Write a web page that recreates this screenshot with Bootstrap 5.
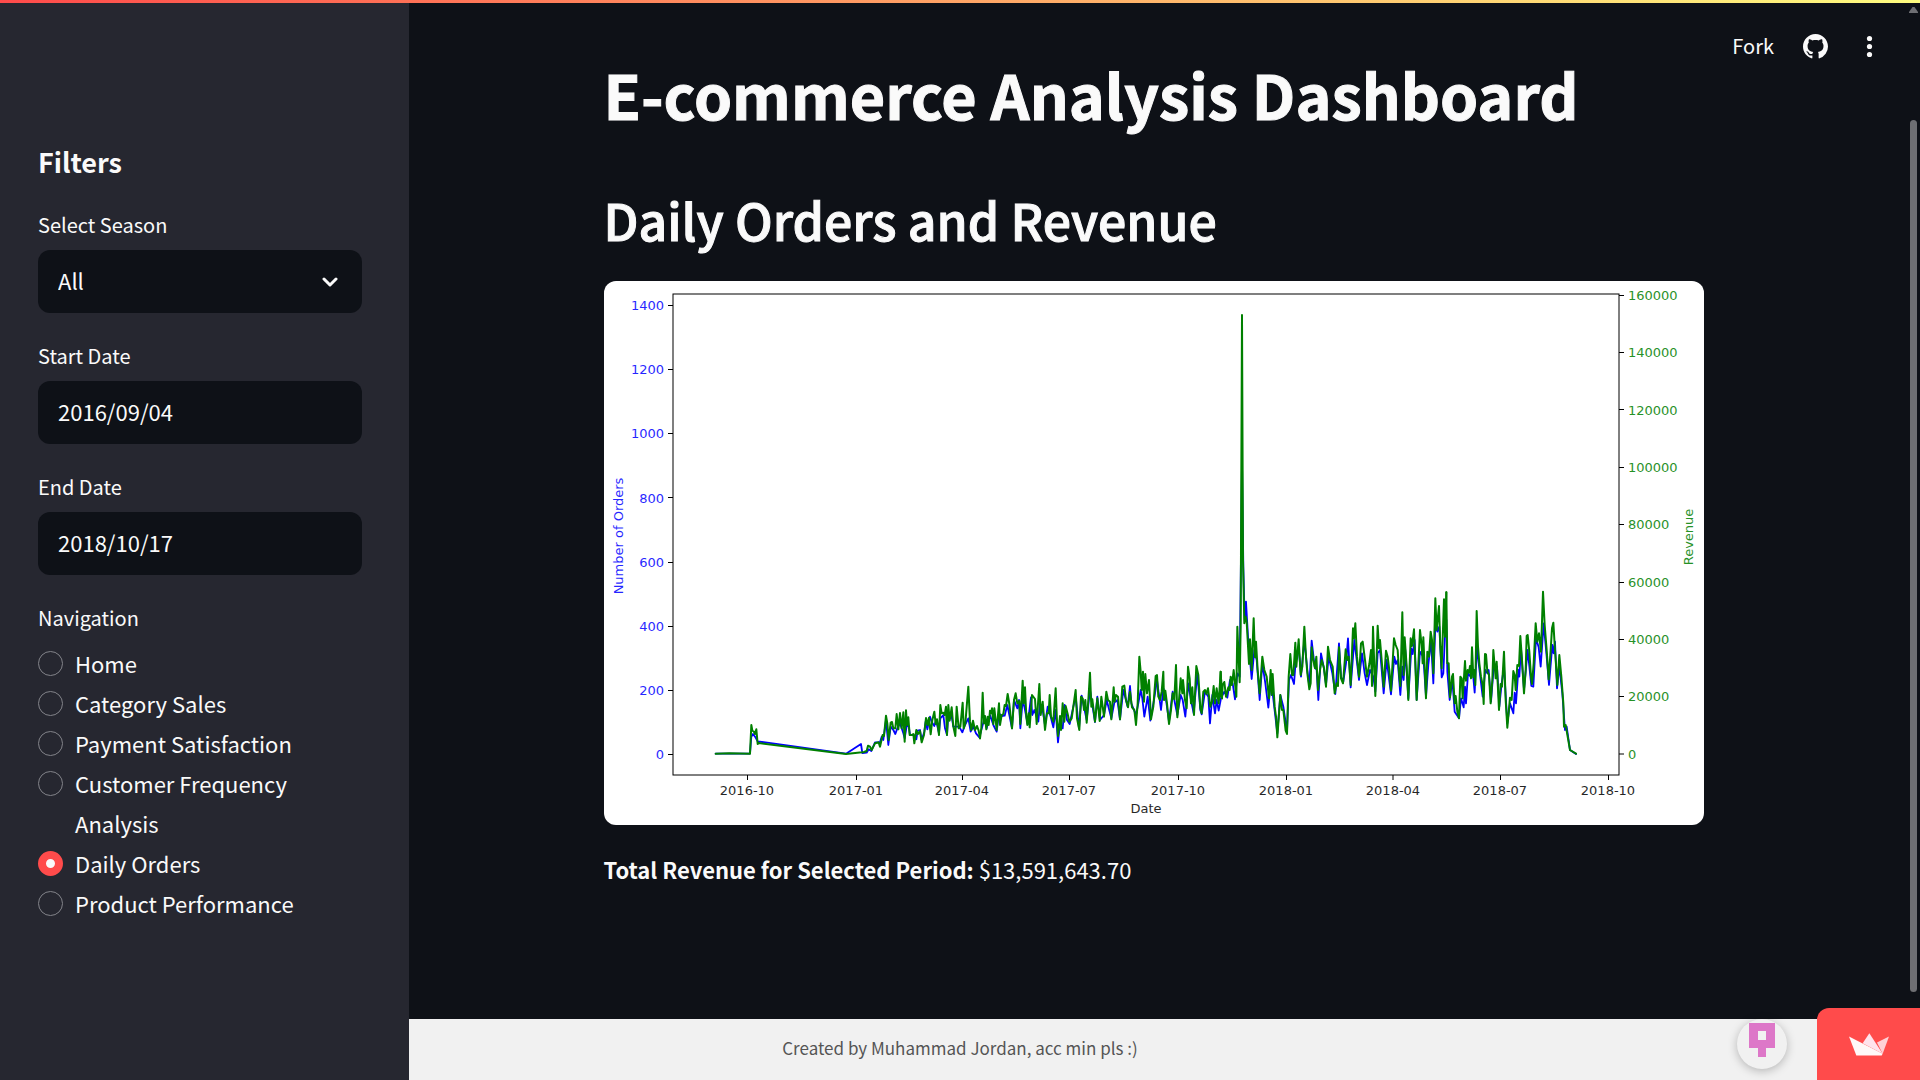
<!DOCTYPE html>
<html lang="en">
<head>
<meta charset="utf-8">
<meta name="viewport" content="width=device-width, initial-scale=1">
<title>E-commerce Analysis Dashboard</title>
<link href="https://cdn.jsdelivr.net/npm/bootstrap@5.3.0/dist/css/bootstrap.min.css" rel="stylesheet">
<style>
  body { background: #0e1117; color: #fafafa; font-family: "Noto Sans CJK SC", "Noto Sans", sans-serif; font-size: 22px; line-height: 40px; }
  .top-line { height: 3px; background: linear-gradient(90deg, #ff4b4b, #fffd80); z-index: 1050; }
  .side-panel { width: 409px; background: #262730; padding: 145px 47px 40px 38px; z-index: 1040; }
  .side-title { font-size: 27px; font-weight: 700; line-height: 34px; margin-bottom: 34px; }
  .field-group { margin-bottom: 31px; }
  .field-label { display: block; font-size: 20px; line-height: 24px; margin-bottom: 13px; }
  .field-box, .field-box:focus { height: 63px; background: #0e1117 none; color: #fafafa; border: 0; border-radius: 12px; padding: 0 20px 4px; font-size: 22px; line-height: 40px; box-shadow: none; }
  .field-arrow { right: 24px; pointer-events: none; }
  .nav-option { display: flex; gap: 12px; margin: 0; padding: 0; min-height: 40px; }
  .nav-option .form-check-input { float: none; flex: none; width: 25px; height: 25px; margin: 8px 0 0; background: #262730; border: 1px solid #83848a; }
  .nav-option .form-check-input:checked { background: #fafafa; border: 8px solid #ff4b4b; }
  .content-pane { padding: 53px 22px 100px 0; }
  .content-column { max-width: 1100px; }
  .page-title { font-size: 61px; font-weight: 700; line-height: 82px; margin-bottom: 50px; -webkit-text-stroke: 1px #fafafa; }
  .section-title { font-size: 50px; font-weight: 500; line-height: 68px; margin-bottom: 28px; -webkit-text-stroke: 1px #fafafa; }
  .chart-frame { background: #fff; border-radius: 12px; overflow: hidden; }
  .chart-frame svg { display: block; width: 100%; height: auto; font: 13px "DejaVu Sans", sans-serif; }
  .chart-frame text { opacity: .85; }
  .summary-line { margin-top: 24px; }
  .tool-links { top: 3px; right: 38px; height: 86px; gap: 29px; font-size: 20px; z-index: 1030; }
  .tool-links a, .tool-links button { color: #fafafa; text-decoration: none; background: none; border: 0; padding: 0; display: flex; align-items: center; }
  .credit-bar { background: #f1f1f1; color: #555; font-size: 17px; height: 61px; padding-bottom: 4px; }
  .corner { bottom: 0; right: 0; z-index: 1045; gap: 30px; }
  .owner-link { width: 50px; height: 50px; border-radius: 50%; background: #f1f1f1; margin-bottom: 11px; box-shadow: 0 2px 10px rgba(0,0,0,.25); overflow: hidden; }
  .host-link { width: 103px; height: 72px; background: #ff4b4b; border-radius: 12px 0 0 0; }
  .owner-link svg, .host-link svg { display: block; }
  .scroll-rail { top: 7px; right: 2px; bottom: 88px; width: 9px; z-index: 1035; }
  .scroll-thumb { width: 7px; background: #6e6f73; border-radius: 4px; margin: 107px auto 0; }
</style>
</head>
<body>
<div class="top-line fixed-top"></div>

<div class="d-flex min-vh-100">
  <aside class="side-panel flex-shrink-0 position-relative">
    <h2 class="side-title">Filters</h2>
    <form>
      <div class="field-group">
        <label class="field-label" for="season">Select Season</label>
        <div class="position-relative d-flex align-items-center">
          <select class="form-select field-box" id="season">
            <option selected>All</option>
          </select>
          <svg class="field-arrow position-absolute" width="16" height="10" viewBox="0 0 16 10" fill="none" stroke="#fafafa" stroke-width="3" stroke-linecap="round" stroke-linejoin="round" aria-hidden="true"><path d="M2 2l6 6 6-6"/></svg>
        </div>
      </div>
      <div class="field-group">
        <label class="field-label" for="start">Start Date</label>
        <input class="form-control field-box" type="text" id="start" value="2016/09/04">
      </div>
      <div class="field-group">
        <label class="field-label" for="end">End Date</label>
        <input class="form-control field-box" type="text" id="end" value="2018/10/17">
      </div>
      <fieldset>
        <legend class="field-label">Navigation</legend>
        <div class="form-check nav-option"><input class="form-check-input" type="radio" name="nav" id="nav1"><label for="nav1">Home</label></div>
        <div class="form-check nav-option"><input class="form-check-input" type="radio" name="nav" id="nav2"><label for="nav2">Category Sales</label></div>
        <div class="form-check nav-option"><input class="form-check-input" type="radio" name="nav" id="nav3"><label for="nav3">Payment Satisfaction</label></div>
        <div class="form-check nav-option"><input class="form-check-input" type="radio" name="nav" id="nav4"><label for="nav4">Customer Frequency Analysis</label></div>
        <div class="form-check nav-option"><input class="form-check-input" type="radio" name="nav" id="nav5" checked><label for="nav5">Daily Orders</label></div>
        <div class="form-check nav-option"><input class="form-check-input" type="radio" name="nav" id="nav6"><label for="nav6">Product Performance</label></div>
      </fieldset>
    </form>
  </aside>

  <main class="content-pane flex-grow-1">
    <div class="content-column mx-auto">
      <h1 class="page-title">E-commerce Analysis Dashboard</h1>
      <h2 class="section-title">Daily Orders and Revenue</h2>
      <div class="chart-frame">
        <svg viewBox="0 0 1100 544" role="img" aria-label="Daily orders and revenue over time">
          <g fill="none" stroke="#000" stroke-width="1">
            <rect x="69" y="13" width="946" height="481"/>
            <path d="M64 24.5h5M64 88.5h5M64 152.5h5M64 216.5h5M64 281.5h5M64 345.5h5M64 409.5h5M64 473.5h5"/>
            <path d="M1015 14.5h5M1015 71.5h5M1015 128.5h5M1015 186.5h5M1015 243.5h5M1015 301.5h5M1015 358.5h5M1015 415.5h5M1015 473h5"/>
            <path d="M143.5 494v5M252.5 494v5M358.5 494v5M465.5 494v5M574.5 494v5M682.5 494v5M789 494v5M896.5 494v5M1004.5 494v5"/>
          </g>
          <g fill="#00f" text-anchor="end">
            <text x="60" y="29">1400</text><text x="60" y="93">1200</text><text x="60" y="157">1000</text><text x="60" y="222">800</text>
            <text x="60" y="286">600</text><text x="60" y="350">400</text><text x="60" y="414">200</text><text x="60" y="478">0</text>
          </g>
          <g fill="#008000">
            <text x="1024" y="19">160000</text><text x="1024" y="76">140000</text><text x="1024" y="134">120000</text><text x="1024" y="191">100000</text>
            <text x="1024" y="248">80000</text><text x="1024" y="306">60000</text><text x="1024" y="363">40000</text><text x="1024" y="420">20000</text><text x="1024" y="478">0</text>
          </g>
          <g fill="#000" text-anchor="middle">
            <text x="143" y="514">2016-10</text><text x="252" y="514">2017-01</text><text x="358" y="514">2017-04</text><text x="465" y="514">2017-07</text><text x="574" y="514">2017-10</text>
            <text x="682" y="514">2018-01</text><text x="789" y="514">2018-04</text><text x="896" y="514">2018-07</text><text x="1004" y="514">2018-10</text>
            <text x="542" y="532">Date</text>
          </g>
          <text fill="#00f" text-anchor="middle" transform="translate(19 255) rotate(-90)">Number of Orders</text>
          <text fill="#008000" text-anchor="middle" transform="translate(1089 256) rotate(-90)">Revenue</text>

          <!-- orders per day, in four stretches of the time axis -->
          <g fill="none" stroke="#00f" stroke-width="5.4" stroke-linejoin="round" stroke-linecap="round">
            <g transform="translate(86 319) scale(.33333)"><polyline points="77,461 180,461 184,410 189,402 195,410 203,424 468,461 513,432 517,459 530,458 536,448 544,453 555,427 570,427 575,410 580,420 588,360 595,435 602,380 610,390 616,402 622,385 630,370 640,400 644,415 650,378 656,378 660,405 672,405 679,418 683,392 690,390 695,420 703,395 707,365 712,388 720,350 725,365 733,378 738,360 747,400 751,355 760,345 765,385 771,405 775,345 785,350 790,380 800,380 806,380 812,388 817,397 825,375 835,355 842,395 850,380 858,400 868,412 870,405"/></g>
            <g transform="translate(376 319) scale(.33333)"><polyline points="0,405 8,375 15,350 20,385 30,345 40,375 50,395 57,340 65,348 74,347 82,315 88,345 96,385 102,300 112,325 117,300 121,385 128,300 133,320 143,372 153,292 157,345 163,330 175,365 180,310 188,330 195,375 203,320 212,350 220,382 227,330 234,427 240,370 248,385 254,315 261,360 269,372 280,320 287,290 297,385 305,287 320,360 330,270 345,366 352,290 360,360 372,345 380,300 394,355 403,308 412,300 420,358 430,270 443,320 450,258 454,310 468,345 475,310 482,270 487,295 493,350 503,290 511,362 522,300 531,240 543,330 550,265 556,285 567,365 578,275 583,300 592,345 602,285 608,300 616,350 625,250 633,300 641,340 652,220 661,330 665,343 675,275 685,290 690,370 697,285 705,340 710,300 716,332 722,300"/></g>
            <g transform="translate(616 279) scale(.33333)"><polyline points="0,420 13,395 22,413 30,360 38,370 45,418 52,340 59,350 66,-300 70,20 74,180 78,125 84,230 90,300 95,357 103,270 110,300 119,420 127,310 136,370 145,443 152,370 158,400 172,520 181,405 190,440 201,515 207,360 213,345 222,372 228,290 236,260 243,350 253,240 262,330 268,380 275,242 284,320 290,330 295,420 303,280 311,320 318,375 326,290 337,340 346,402 357,250 363,350 370,365 378,310 384,235 392,382 403,240 410,300 417,360 426,280 434,340 441,375 450,330 460,350 466,395 473,280 480,270 491,400 500,300 513,403 523,290 528,312 533,300 541,405 547,320 551,360 556,270 565,415 574,265 578,282 584,240 590,420 600,275 610,290 618,410 625,315 633,240 640,370 647,170 652,215 658,200 665,352 670,340 677,180 679,180"/></g>
            <g transform="translate(816 279) scale(.33333)"><polyline points="79,180 82,335 89,420 97,360 104,455 117,475 123,415 131,442 135,380 138,430 144,340 152,350 158,330 164,398 171,258 176,310 188,410 196,330 202,340 206,330 213,425 222,310 231,320 238,440 245,370 252,320 262,490 270,430 280,460 284,398 288,430 295,330 298,350 303,265 312,390 323,270 334,378 340,380 348,235 356,262 362,320 371,190 380,290 387,375 397,255 401,280 405,245 411,385 418,320 427,400 435,510 440,500 450,570 468,582"/></g>
          </g>
          <!-- revenue per day, same stretches -->
          <g fill="none" stroke="#008000" stroke-width="6" stroke-linejoin="round" stroke-linecap="round">
            <g transform="translate(86 319) scale(.33333)"><polyline points="77,461 118,460 180,461 184,375 187,392 191,394 195,402 199,388 203,432 206,429 468,462 516,457 522,456 530,453 534,437 540,440 545,450 555,430 566,427 570,440 578,405 582,408 588,347 592,370 596,420 602,368 606,366 610,385 616,385 620,342 625,388 630,339 635,385 640,337 644,425 648,331 651,375 655,352 659,405 665,405 670,402 673,430 679,390 684,402 690,393 695,427 702,405 708,354 713,375 717,353 722,403 727,360 733,335 737,372 741,358 747,405 751,315 755,340 760,338 764,345 768,320 771,405 775,315 779,362 785,322 790,380 796,408 800,320 806,385 811,380 818,308 821,385 826,370 835,260 840,365 844,390 849,362 855,390 861,378 866,392 870,415"/></g>
            <g transform="translate(376 319) scale(.33333)"><polyline points="0,415 4,385 8,278 12,370 15,348 19,388 23,350 26,375 30,332 33,340 36,325 40,372 43,325 50,390 57,310 60,375 65,345 70,342 74,315 78,318 83,282 88,312 96,385 102,300 107,280 112,310 118,303 121,372 128,242 131,310 135,262 139,350 142,375 146,340 149,382 156,285 165,297 170,372 178,252 182,345 188,305 195,390 201,340 206,340 209,285 213,350 220,365 227,265 231,365 234,408 240,348 243,390 248,310 253,365 257,318 263,342 268,365 275,355 280,320 287,270 291,355 298,390 303,290 308,295 312,330 316,300 320,368 325,300 330,218 334,320 337,298 345,365 352,295 359,363 364,290 372,350 379,275 384,300 390,305 394,358 401,262 404,305 408,285 414,290 420,358 427,260 433,257 438,300 444,322 450,275 456,322 463,330 468,375 473,310 478,170 482,215 485,270 489,215 492,305 496,222 501,280 507,240 513,358 520,320 527,228 531,225 535,290 540,300 545,275 550,215 552,300 556,272 561,310 567,372 573,330 578,280 583,298 588,195 592,352 597,300 602,235 607,280 609,240 615,300 620,325 624,200 629,235 633,310 637,262 642,345 649,198 655,225 661,325 665,340 670,275 675,270 679,282 684,265 691,320 696,305 701,258 705,310 710,265 716,310 722,215 726,295"/></g>
            <g transform="translate(616 279) scale(.33333)"><polyline points="0,410 2,335 6,415 8,375 13,366 18,410 25,382 29,390 32,350 36,375 41,330 49,410 52,200 59,367 62,200 66,-735 69,0 73,190 77,170 80,185 83,240 87,312 90,238 95,330 101,175 105,292 108,245 113,330 119,400 127,290 133,330 140,350 147,415 152,330 155,405 158,342 164,440 168,470 172,532 181,405 186,450 190,450 197,512 201,522 206,350 211,282 216,345 220,345 226,248 229,320 236,238 242,345 247,320 253,200 258,290 262,340 268,388 272,370 275,262 280,300 285,325 289,290 294,390 300,330 305,300 312,325 318,380 324,260 330,300 338,320 344,400 350,370 354,378 357,262 363,355 369,370 377,268 382,300 386,290 392,375 399,205 402,235 406,190 411,290 417,350 423,250 428,245 435,300 441,350 448,312 453,270 456,378 459,200 466,408 473,197 477,265 480,240 485,300 491,380 498,272 503,290 508,330 513,392 522,235 527,255 533,270 538,350 541,378 547,157 551,345 554,232 560,320 565,420 572,235 576,258 582,208 590,420 600,210 605,255 608,310 610,232 618,415 622,275 627,290 632,215 636,240 640,340 646,115 650,210 657,138 661,260 665,325 672,118 675,230 679,97"/></g>
            <g transform="translate(816 279) scale(.33333)"><polyline points="79,97 82,310 86,310 90,412 96,350 99,342 104,430 107,408 112,455 117,475 121,350 125,355 128,415 135,303 138,362 143,330 147,338 150,318 153,355 156,262 160,352 164,330 166,375 170,153 174,260 178,310 183,350 188,375 191,432 195,282 198,283 202,335 207,345 212,430 217,360 220,270 227,355 230,305 237,450 242,372 246,380 252,275 257,420 262,503 270,413 275,420 280,333 284,345 287,390 292,315 297,318 301,228 306,300 312,400 317,330 320,228 323,225 328,275 333,350 336,372 341,310 347,190 352,245 357,220 363,275 369,95 374,195 380,270 386,358 392,270 396,205 400,188 405,270 412,375 418,285 424,350 430,430 432,500 437,495 450,570 468,581"/></g>
          </g>
        </svg>
      </div>
      <p class="summary-line mb-0"><strong>Total Revenue for Selected Period:</strong> $13,591,643.70</p>
    </div>
  </main>
</div>

<nav class="tool-links position-absolute d-flex align-items-center" aria-label="App tools">
  <a href="#">Fork</a>
  <a href="#" aria-label="View source on GitHub">
    <svg width="25" height="25" viewBox="0 0 16 16" fill="currentColor"><path d="M8 0C3.58 0 0 3.58 0 8c0 3.54 2.29 6.53 5.47 7.59.4.07.55-.17.55-.38 0-.19-.01-.82-.01-1.49-2.01.37-2.53-.49-2.69-.94-.09-.23-.48-.94-.82-1.13-.28-.15-.68-.52-.01-.53.63-.01 1.08.58 1.23.82.72 1.21 1.87.87 2.33.66.07-.52.28-.87.51-1.07-1.78-.2-3.64-.89-3.64-3.95 0-.87.31-1.59.82-2.15-.08-.2-.36-1.02.08-2.12 0 0 .67-.21 2.2.82.64-.18 1.32-.27 2-.27s1.36.09 2 .27c1.53-1.04 2.2-.82 2.2-.82.44 1.1.16 1.92.08 2.12.51.56.82 1.27.82 2.15 0 3.07-1.87 3.75-3.65 3.95.29.25.54.73.54 1.48 0 1.07-.01 1.93-.01 2.2 0 .21.15.46.55.38A8.01 8.01 0 0 0 16 8c0-4.42-3.58-8-8-8z"/></svg>
  </a>
  <button type="button" aria-label="Main menu">
    <svg width="25" height="25" viewBox="0 0 25 25" fill="currentColor"><circle cx="12.500" cy="4.500" r="2.600"/><circle cx="12.500" cy="12.500" r="2.600"/><circle cx="12.500" cy="20.500" r="2.600"/></svg>
  </button>
</nav>

<div class="scroll-rail position-fixed d-flex flex-column" aria-hidden="true">
  <svg width="9" height="6" viewBox="0 0 9 6" fill="#6e6f73"><path d="M3.500 0h2L9 5v1H0V5z"/></svg>
  <div class="scroll-thumb flex-grow-1"></div>
</div>

<footer class="credit-bar fixed-bottom d-flex align-items-center justify-content-center">Created by Muhammad Jordan, acc min pls :)</footer>

<div class="corner position-fixed d-flex align-items-end">
  <a class="owner-link" href="#" aria-label="App owner">
    <svg width="50" height="50" viewBox="0 0 50 50"><path fill="#dd77c8" fill-rule="evenodd" d="M12 4h26v25h-9v9h-8v-9h-9zM21 12v9h8v-9z"/></svg>
  </a>
  <a class="host-link d-flex align-items-center justify-content-center" href="#" aria-label="Hosted with Streamlit">
    <svg width="40" height="23" viewBox="0 0 120 68"><path fill="#ffd0d6" d="M120 10L84 28l17 34z"/><path fill="#ffe3ec" d="M61 0L41 30l60 32z"/><path fill="#fff8f8" d="M0 10l101 52-3 5H22z"/></svg>
  </a>
</div>
<script src="https://cdn.jsdelivr.net/npm/bootstrap@5.3.0/dist/js/bootstrap.bundle.min.js"></script>
</body>
</html>
